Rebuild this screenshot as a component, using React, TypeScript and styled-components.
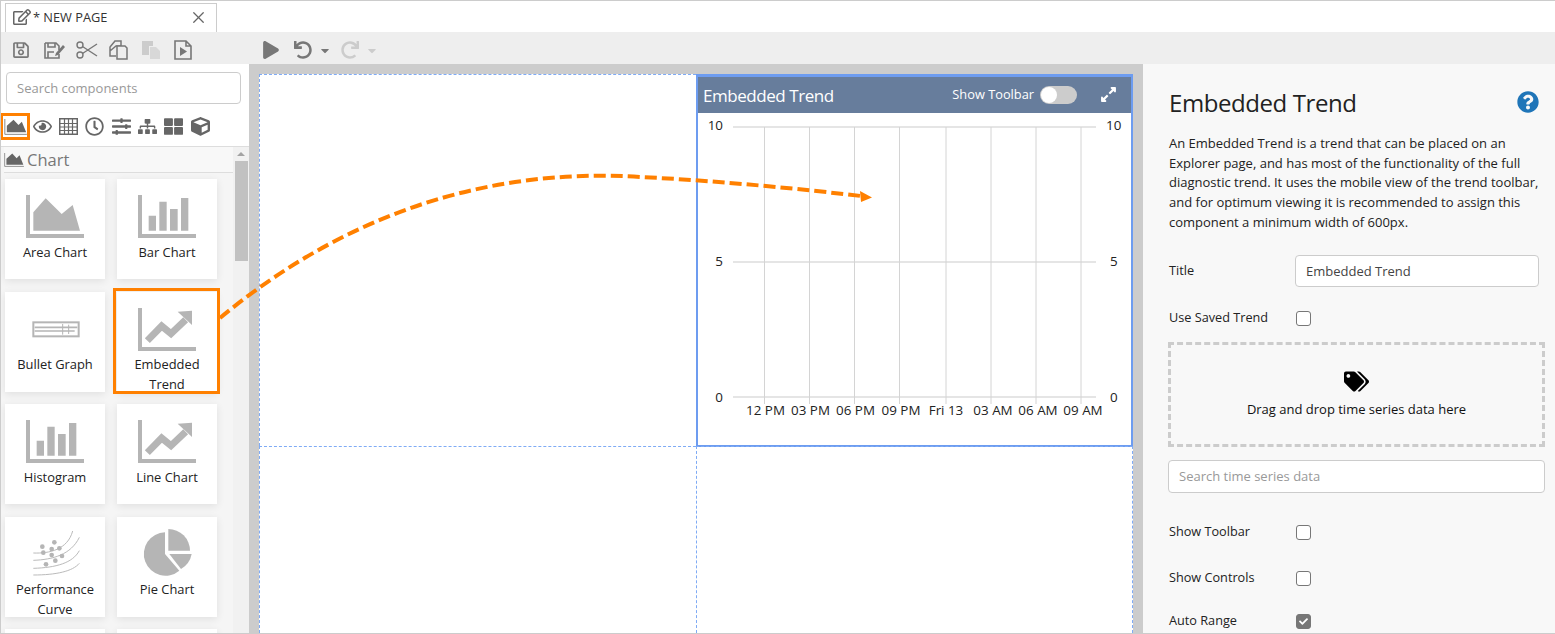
import React from "react";
import styled, { createGlobalStyle } from "styled-components";
import { X } from "lucide-react";
import {
  FaRegEdit, FaRegSave, FaPlay, FaUndo, FaRedo, FaCaretDown, FaRegEye, FaRegClock,
  FaSlidersH, FaSitemap, FaThLarge, FaCube, FaTags, FaQuestionCircle, FaExpandAlt, FaCheck,
} from "react-icons/fa";

const FONT = `"Open Sans", "Noto Sans", "Liberation Sans", sans-serif`;

const Global = createGlobalStyle`
  html, body { margin: 0; padding: 0; background: #fff; }
  body { font-family: ${FONT}; color: #1b1b1b; }
  *, *::before, *::after { box-sizing: border-box; }
`;

const Page = styled.div`
  position: relative;
  width: 1555px;
  height: 634px;
  overflow: hidden;
  display: grid;
  grid-template-rows: 31px 32px 1fr;
  border-top: 1px solid #ccc;
  border-bottom: 1px solid #ccc;
  border-left: 1px solid #ccc;
`;
const TabBar = styled.div`
  display: flex;
  align-items: flex-end;
  padding-left: 4px;
  background: #fff;
`;
const Tab = styled.div`
  width: 212px;
  height: 29px;
  border: 1px solid #ccc;
  border-bottom: 0;
  display: flex;
  align-items: center;
  padding: 0 8px 2px 7px;
  font-size: 12.8px;
  color: #333;
  background: #fff;
  gap: 2px;
  & > span { flex: 1; }
`;
const TabClose = styled(X)`
  width: 19px;
  height: 19px;
  color: #666;
  stroke-width: 1.6;
`;
const TabIcon = styled(FaRegEdit)`
  font-size: 18px;
  color: #666;
`;
const Toolbar = styled.div`
  background: #eee;
  display: flex;
  align-items: center;
  padding: 4px 0 0 11px;
`;
const ToolGroup = styled.div<{ $w?: number }>`
  display: flex;
  align-items: center;
  gap: 10px;
  width: ${(p) => p.$w ?? 250}px;
`;
const ToolIcon = styled.span<{ $off?: boolean }>`
  display: inline-flex;
  align-items: center;
  width: 22px;
  height: 20px;
  font-size: 18px;
  color: ${(p) => (p.$off ? "#ccc" : "#777")};
`;
const Caret = styled(ToolIcon)`
  width: 12px;
  font-size: 13px;
  margin-left: -7px;
`;
const Body = styled.div`
  display: grid;
  grid-template-columns: 248px 1fr 412px;
  min-height: 0;
`;
const Left = styled.aside`
  background: #fff;
  display: flex;
  flex-direction: column;
  min-height: 0;
`;
const SearchWrap = styled.div`
  padding: 8px 8px 0 5px;
`;
const Field = styled.div<{ $muted?: boolean; $h?: number }>`
  height: ${(p) => p.$h ?? 32}px;
  background: #fff;
  border: 1px solid #ccc;
  border-radius: 4px;
  display: flex;
  align-items: center;
  padding: 0 10px;
  font-size: 13px;
  color: ${(p) => (p.$muted ? "#999" : "#444")};
  flex: 1;
`;
const Categories = styled.div`
  height: 43px;
  padding-top: 9px;
  display: flex;
  align-items: flex-start;
  border-bottom: 1px solid #ddd;
`;
const CategoryIcon = styled.span<{ $active?: boolean }>`
  width: ${(p) => (p.$active ? 30 : 20)}px;
  height: 27px;
  margin-left: ${(p) => (p.$active ? -1 : 0)}px;
  margin-right: ${(p) => (p.$active ? 2 : 6.4)}px;
  display: inline-flex;
  align-items: center;
  justify-content: center;
  font-size: 19px;
  color: #666;
  border: ${(p) => (p.$active ? "3px solid #ff8000" : "0")};
`;
const ListArea = styled.div`
  flex: 1;
  min-height: 0;
  display: grid;
  grid-template-columns: 1fr 16px;
  overflow: hidden;
`;
const List = styled.div`
  background: #f5f5f5;
  overflow: hidden;
`;
const SectionHead = styled.div`
  height: 26px;
  margin-left: 3px;
  display: flex;
  align-items: center;
  gap: 3px;
  font-size: 16.5px;
  color: #777;
  border-bottom: 1px solid #ddd;
  background: #f8f8f8;
`;
const Cards = styled.div`
  display: grid;
  grid-template-columns: 100px 100px;
  grid-auto-rows: 100px;
  column-gap: 12px;
  row-gap: 12.5px;
  padding: 6px 0 0 4px;
`;
const Card = styled.div<{ $selected?: boolean }>`
  position: relative;
  background: #fff;
  box-shadow: 0 2px 8px rgba(0, 0, 0, 0.09);
  display: flex;
  flex-direction: column;
  align-items: center;
  padding-top: 16px;
  text-align: center;
  &::after {
    content: "";
    display: ${(p) => (p.$selected ? "block" : "none")};
    position: absolute;
    left: -4px;
    top: -4px;
    width: 107px;
    height: 106px;
    border: 3px solid #ff8000;
  }
`;
const CardIcon = styled.svg`
  width: 60px;
  height: 44px;
  flex: none;
  display: block;
  overflow: visible;
`;
const CardLabel = styled.div`
  margin-top: 2.5px;
  font-size: 12.9px;
  line-height: 20px;
  color: #222;
  width: 90px;
`;
const Scroll = styled.div`
  background: #f1f1f1;
  display: flex;
  flex-direction: column;
  align-items: center;
  padding-top: 5px;
`;
const ScrollUp = styled.div`
  width: 0;
  height: 0;
  border-left: 4px solid transparent;
  border-right: 4px solid transparent;
  border-bottom: 4px solid #a3a3a3;
  margin-bottom: 5px;
`;
const ScrollThumb = styled.div`
  width: 13px;
  height: 100px;
  background: #c1c1c1;
`;
const Stage = styled.main`
  background: #ccc;
  padding: 10px 0 0 10px;
  min-height: 0;
  overflow: hidden;
`;
const Canvas = styled.div`
  height: 100%;
  width: 874px;
  background: #fff;
  display: grid;
  grid-template-columns: 437px 437px;
  grid-template-rows: 372px 1fr;
`;
const Cell = styled.div`
  border-left: 1px dashed #7fabf5;
  border-top: 1px dashed #7fabf5;
  &:nth-child(2n) { border-right: 1px dashed #7fabf5; }
`;
const Widget = styled.div`
  border: 2px solid #6d9cf0;
  border-top-width: 3px;
  display: flex;
  flex-direction: column;
  background: #fff;
  margin: 0 0 -1px 0;
`;
const WidgetHead = styled.div`
  height: 36px;
  background: #677d9c;
  display: flex;
  align-items: center;
  padding: 0 14px 0 5px;
  color: #fff;
  flex: none;
`;
const WidgetTitle = styled.div`
  flex: 1;
  font-size: 17px;
  letter-spacing: -0.45px;
`;
const ToolbarText = styled.div`
  font-size: 12.8px;
  margin-right: 6px;
  padding-bottom: 2px;
`;
const Toggle = styled.div`
  width: 37px;
  height: 18px;
  border-radius: 9px;
  background: #ccc;
  margin-right: 23px;
  display: flex;
  align-items: center;
  padding-left: 1px;
  &::before {
    content: "";
    width: 16px;
    height: 16px;
    border-radius: 50%;
    background: #fff;
  }
`;
const ExpandIcon = styled(FaExpandAlt)`
  font-size: 17px;
  margin-bottom: 2px;
`;
const ChartSvg = styled.svg`
  display: block;
  width: 433px;
  height: 332px;
  flex: none;
  font-family: ${FONT};
  font-size: 13.4px;
  fill: #222;
`;
const Panel = styled.aside`
  background: #f8f8f8;
  padding: 19px 10px 0 26px;
  overflow: hidden;
  min-height: 0;
`;
const PanelHead = styled.div`
  display: flex;
  justify-content: space-between;
  align-items: center;
  padding-right: 6px;
`;
const PanelTitle = styled.h1`
  margin: 0;
  font-size: 24px;
  letter-spacing: -0.42px;
  line-height: 40px;
  font-weight: 400;
  color: #222;
`;
const Help = styled(FaQuestionCircle)`
  font-size: 22px;
  color: #1f75b8;
  margin-top: -2px;
`;
const Desc = styled.p`
  margin: 11px 0 0;
  font-size: 13px;
  line-height: 19.7px;
  color: #222;
  width: 380px;
  white-space: pre-line;
`;
const Row = styled.div<{ $mt: number }>`
  display: flex;
  align-items: center;
  margin-top: ${(p) => p.$mt}px;
  font-size: 12.7px;
  color: #222;
`;
const RowLabel = styled.div<{ $w?: number; $pb?: number }>`
  width: ${(p) => p.$w ?? 127}px;
  flex: none;
  padding-bottom: ${(p) => p.$pb ?? 4}px;
`;
const TitleField = styled(Field)`
  flex: none;
  width: 244px;
`;
const Check = styled.span<{ $on?: boolean }>`
  width: 15px;
  height: 15px;
  border: 1.5px solid #777;
  border-radius: 3px;
  background: ${(p) => (p.$on ? "#777" : "#fff")};
  display: inline-flex;
  align-items: center;
  justify-content: center;
  color: #fff;
  font-size: 9px;
`;
const Drop = styled.div`
  margin: 12px 0 0 -1px;
  width: 377px;
  height: 105px;
  border: 3px dashed #ccc;
  display: flex;
  flex-direction: column;
  align-items: center;
  padding-top: 24px;
  font-size: 13px;
  color: #111;
  gap: 6px;
  & svg { font-size: 25px; color: #000; }
`;
const SearchRow = styled.div`
  display: flex;
  margin: 13px 0 0 -1px;
  width: 377px;
`;
const Overlay = styled.svg`
  position: absolute;
  left: 0;
  top: 0;
  width: 1555px;
  height: 634px;
  pointer-events: none;
`;

const axis = <path d="M0 0h12v117h162v12H0z" fill="#b5b5b5" />;
const barBody = (
  <>
    {axis}
    <path d="M32 62h22v45H32zM64 20h22v87H64zM96 42h23v65H96zM129 9h22v98h-22z" fill="#b5b5b5" />
  </>
);
const trendBody = (
  <>
    {axis}
    <path d="M28 98l43-44 28 23 44-42" fill="none" stroke="#b5b5b5" strokeWidth="21" />
    <path d="M119 11l43-3v43z" fill="#b5b5b5" />
  </>
);
const icons: Record<string, React.ReactNode> = {
  area: (
    <>
      {axis}
      <path d="M22 107V52L59 10l48 47 33-27 22 77z" fill="#b5b5b5" />
    </>
  ),
  bar: barBody,
  bullet: (
    <g fill="none" stroke="#b5b5b5">
      <rect x="22" y="43" width="136" height="42" strokeWidth="6" />
      <path d="M26 58h128M26 69h120" strokeWidth="5" />
      <path d="M110 48v32M128 50v28" strokeWidth="3" />
    </g>
  ),
  trend: trendBody,
  perf: (
    <g>
      <g fill="none" stroke="#bbb" strokeWidth="3">
        <path d="M22 126C90 126 140 115 160 91" />
        <path d="M22 106C90 104 140 90 160 53" />
        <path d="M22 82C80 80 135 65 160 13" />
        <path d="M22 60C70 62 125 50 140 -6" />
      </g>
      <g fill="#b5b5b5">
        <circle cx="49" cy="41" r="7" /><circle cx="52" cy="59" r="7" /><circle cx="77" cy="48" r="7" />
        <circle cx="85" cy="28" r="7" /><circle cx="100" cy="46" r="7" /><circle cx="77" cy="66" r="7" />
        <circle cx="108" cy="69" r="7" /><circle cx="88" cy="83" r="7" /><circle cx="60" cy="94" r="7" />
      </g>
    </g>
  ),
  pie: (
    <g fill="#b5b5b5">
      <path d="M91-12v65h65a65 65 0 0 0-65-65z" />
      <path d="M94 63h67a66 66 0 0 1-32 45z" />
      <path d="M81-2v65l43 50a65 65 0 1 1-43-115z" />
    </g>
  ),
};

const cards: { key: string; label: string; selected?: boolean }[] = [
  { key: "area", label: "Area Chart" },
  { key: "bar", label: "Bar Chart" },
  { key: "bullet", label: "Bullet Graph" },
  { key: "trend", label: "Embedded Trend", selected: true },
  { key: "bar", label: "Histogram" },
  { key: "trend", label: "Line Chart" },
  { key: "perf", label: "Performance Curve" },
  { key: "pie", label: "Pie Chart" },
  { key: "", label: "" },
  { key: "", label: "" },
];

const vLines = [66.5, 111.5, 156.5, 201.5, 248, 293, 338, 383];
const xLabels = ["12 PM", "03 PM", "06 PM", "09 PM", "Fri 13", "03 AM", "06 AM", "09 AM"];
const xLabelPos = [67.5, 112.5, 157.5, 203, 248, 295, 340, 385];

const AreaGlyph = ({ w = 23, h = 16 }: { w?: number; h?: number }) => (
  <svg width={w} height={h} viewBox="0 0 68 48">
    <path d="M8 40V20L28 2l15 16L53 8l13 32z" fill="#666" />
    <path d="M2 0v46h66" fill="none" stroke="#888" strokeWidth="3" />
  </svg>
);
const TableGlyph = () => (
  <svg width="19" height="17" viewBox="0 0 19 17" fill="none" stroke="#666">
    <rect x="0.75" y="0.75" width="17.5" height="15.5" strokeWidth="1.5" />
    <path d="M0 5.5h19M0 9h19M0 12.5h19M5.5 1v15M9.5 1v15M13.5 1v15" strokeWidth="1.2" />
  </svg>
);
const SaveEdit = () => (
  <svg width="22" height="20" viewBox="0 0 22 20" fill="none" stroke="#777" strokeWidth="1.6">
    <path d="M1 3h11l3 3v4M15 14v4H1V3" />
    <path d="M4 3v4h7V3M4 18v-6h6" />
    <path d="M11 16l1-3 7-8 2 2-7 8z" fill="#777" stroke="none" />
  </svg>
);
const Scissors = () => (
  <svg width="22" height="18" viewBox="0 0 22 18" fill="none" stroke="#777" strokeWidth="1.4">
    <circle cx="4" cy="4" r="3" /><circle cx="4" cy="14" r="3" />
    <path d="M6.5 5.5L21 15M6.5 12.5L21 3" />
  </svg>
);
const CopyGlyph = () => (
  <svg width="22" height="20" viewBox="0 0 22 20" fill="none" stroke="#777" strokeWidth="1.5">
    <path d="M7 1h6v5H8L2 11v-4zM2 7l5-6M2 11v5h6" />
    <path d="M9 6h8l2 2v11H9zM9 6v3" fill="#eee" />
  </svg>
);
const PasteGlyph = () => (
  <svg width="22" height="20" viewBox="0 0 22 20">
    <path d="M2 1h11v5H9v9H2z" fill="#ccc" />
    <path d="M10 7h6l4 4v8H10z" fill="#d8d8d8" />
  </svg>
);
const PagePlay = () => (
  <svg width="22" height="20" viewBox="0 0 22 20" fill="none" stroke="#777" strokeWidth="1.6">
    <path d="M3 1h11l5 5v13H3zM14 1v5h5" />
    <path d="M8 7l7 4.5-7 4.5z" fill="#777" stroke="none" />
  </svg>
);

export default function App() {
  return (
    <>
      <Global />
      <Page>
        <TabBar>
          <Tab>
            <TabIcon />
            <span>* NEW PAGE</span>
            <TabClose />
          </Tab>
        </TabBar>
        <Toolbar>
          <ToolGroup $w={250}>
            <ToolIcon><FaRegSave /></ToolIcon>
            <ToolIcon><SaveEdit /></ToolIcon>
            <ToolIcon><Scissors /></ToolIcon>
            <ToolIcon><CopyGlyph /></ToolIcon>
            <ToolIcon $off><PasteGlyph /></ToolIcon>
            <ToolIcon><PagePlay /></ToolIcon>
          </ToolGroup>
          <ToolGroup $w={140}>
            <ToolIcon><FaPlay /></ToolIcon>
            <ToolIcon><FaUndo /></ToolIcon>
            <Caret><FaCaretDown /></Caret>
            <ToolIcon $off><FaRedo /></ToolIcon>
            <Caret $off><FaCaretDown /></Caret>
          </ToolGroup>
        </Toolbar>
        <Body>
          <Left>
            <SearchWrap>
              <Field $muted>Search components</Field>
            </SearchWrap>
            <Categories>
              <CategoryIcon $active><AreaGlyph /></CategoryIcon>
              <CategoryIcon><FaRegEye /></CategoryIcon>
              <CategoryIcon><TableGlyph /></CategoryIcon>
              <CategoryIcon><FaRegClock /></CategoryIcon>
              <CategoryIcon><FaSlidersH /></CategoryIcon>
              <CategoryIcon><FaSitemap /></CategoryIcon>
              <CategoryIcon><FaThLarge /></CategoryIcon>
              <CategoryIcon><FaCube /></CategoryIcon>
            </Categories>
            <ListArea>
              <List>
                <SectionHead><AreaGlyph w={20} h={14} />Chart</SectionHead>
                <Cards>
                  {cards.map((c, i) => (
                    <Card key={i} $selected={c.selected}>
                      {c.key && <CardIcon viewBox="0 0 174 132">{icons[c.key]}</CardIcon>}
                      <CardLabel>{c.label}</CardLabel>
                    </Card>
                  ))}
                </Cards>
              </List>
              <Scroll>
                <ScrollUp />
                <ScrollThumb />
              </Scroll>
            </ListArea>
          </Left>
          <Stage>
            <Canvas>
              <Cell />
              <Widget>
                <WidgetHead>
                  <WidgetTitle>Embedded Trend</WidgetTitle>
                  <ToolbarText>Show Toolbar</ToolbarText>
                  <Toggle />
                  <ExpandIcon />
                </WidgetHead>
                <ChartSvg viewBox="0 0 433 332">
                  {[14, 149, 284].map((y) => (
                    <line key={y} x1="35" x2="398" y1={y} y2={y} stroke="#ddd" strokeWidth="1.4" />
                  ))}
                  {vLines.map((x) => (
                    <line key={x} x1={x} x2={x} y1="14" y2="291" stroke="#d4d4d4" strokeWidth="1" />
                  ))}
                  {[["10", 17, 408], ["5", 153, 412], ["0", 289, 412]].map(([t, y, rx]) => (
                    <React.Fragment key={String(t)}>
                      <text x="25" y={y as number} textAnchor="end">{t}</text>
                      <text x={rx as number} y={y as number}>{t}</text>
                    </React.Fragment>
                  ))}
                  {xLabels.map((t, i) => (
                    <text key={t} x={xLabelPos[i]} y="302" textAnchor="middle">{t}</text>
                  ))}
                </ChartSvg>
              </Widget>
              <Cell />
              <Cell />
            </Canvas>
          </Stage>
          <Panel>
            <PanelHead>
              <PanelTitle>Embedded Trend</PanelTitle>
              <Help />
            </PanelHead>
            <Desc>{`An Embedded Trend is a trend that can be placed on an
Explorer page, and has most of the functionality of the full
diagnostic trend. It uses the mobile view of the trend toolbar,
and for optimum viewing it is recommended to assign this
component a minimum width of 600px.`}</Desc>
            <Row $mt={22}>
              <RowLabel $w={126} $pb={2}>Title</RowLabel>
              <TitleField>Embedded Trend</TitleField>
            </Row>
            <Row $mt={21}>
              <RowLabel>Use Saved Trend</RowLabel>
              <Check />
            </Row>
            <Drop>
              <FaTags />
              Drag and drop time series data here
            </Drop>
            <SearchRow>
              <Field $muted $h={33}>Search time series data</Field>
            </SearchRow>
            <Row $mt={29}>
              <RowLabel>Show Toolbar</RowLabel>
              <Check />
            </Row>
            <Row $mt={24}>
              <RowLabel>Show Controls</RowLabel>
              <Check />
            </Row>
            <Row $mt={21}>
              <RowLabel>Auto Range</RowLabel>
              <Check $on><FaCheck /></Check>
            </Row>
          </Panel>
        </Body>
        <Overlay viewBox="0 0 1555 634">
          <path d="M219 317C330 225 470 165 640 176C720 180 800 188 860 195" fill="none" stroke="#ff8000" strokeWidth="4" strokeDasharray="12 5" />
          <path d="M859 190L871 196.5L860 201z" fill="#ff8000" />
        </Overlay>
      </Page>
    </>
  );
}
